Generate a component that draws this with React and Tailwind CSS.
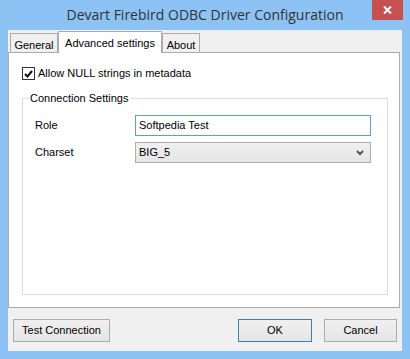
import React from "react";

const Tab = ({ label, active, width }) => (
  <div
    className={
      active
        ? "h-[22px] -mb-px bg-white border border-b-0 border-[#acacac] flex items-start justify-center pt-[3px] text-[11px] text-black relative z-10"
        : "h-[19px] bg-[#f0f0f0] border border-b-0 border-[#acacac] flex items-start justify-center pt-[3px] text-[11px] text-black"
    }
    style={{ width }}
  >
    {label}
  </div>
);

const Button = ({ children, width, primary }) => (
  <button
    className={
      "h-[23px] border text-[11px] text-black bg-gradient-to-b from-[#f0f0f0] to-[#e5e5e5] " +
      (primary ? "border-[#3c7fb1]" : "border-[#acacac]")
    }
    style={{ width }}
  >
    {children}
  </button>
);

export default function App() {
  return (
    <div className="w-[410px] h-[359px] bg-[#8cc3f4] flex flex-col font-['Liberation_Sans',Arial,sans-serif]">
      {/* title bar */}
      <div className="h-[30px] relative flex items-center justify-center">
        <span className="font-['Open_Sans',sans-serif] text-[14px] text-[#333] -mt-[2px]">
          Devart Firebird ODBC Driver Configuration
        </span>
        <div className="absolute right-[7px] top-0 w-[31px] h-[20px] bg-[#c75050] flex items-center justify-center">
          <svg width="9" height="8" viewBox="0 0 9 8">
            <path d="M1 0.5 L8 7.5 M8 0.5 L1 7.5" stroke="white" strokeWidth="2" />
          </svg>
        </div>
      </div>

      {/* client area */}
      <div className="mx-[8px] mb-[8px] flex-1 bg-[#f0f0f0] flex flex-col">
        <div className="h-[22px] flex items-end pl-[2px]">
          <Tab label="General" width={48} />
          <Tab label="Advanced settings" width={104} active />
          <Tab label="About" width={38} />
        </div>

        <div className="h-[256px] mr-[2px] bg-white border border-[#acacac] flex flex-col">
          <label className="mt-[14px] ml-[13px] h-[13px] leading-[13px] flex items-center gap-[3px] text-[11px] text-black">
            <span className="w-[13px] h-[13px] border border-[#333] bg-white flex items-center justify-center">
              <svg width="9" height="8" viewBox="0 0 9 8">
                <path d="M1 4 L3.5 6.5 L8 1" stroke="#111" strokeWidth="2" fill="none" />
              </svg>
            </span>
            Allow NULL strings in metadata
          </label>

          <div className="relative mt-[18px] ml-[13px] mr-[11px] h-[197px] border border-[#dcdcdc]">
            <span className="absolute -top-[8px] left-[5px] bg-white px-[2px] text-[11px] text-black leading-[14px]">
              Connection Settings
            </span>
            <div className="mt-[16px] flex items-center">
              <span className="w-[112px] pl-[12px] text-[11px] text-black">Role</span>
              <div className="w-[236px] h-[21px] border border-[#569de5] bg-white flex items-center pl-[3px] text-[11px] text-black">
                Softpedia Test
              </div>
            </div>
            <div className="mt-[6px] flex items-center">
              <span className="w-[112px] pl-[12px] text-[11px] text-black">Charset</span>
              <div className="w-[236px] h-[21px] border border-[#acacac] bg-gradient-to-b from-[#f0f0f0] to-[#e5e5e5] flex items-center justify-between pl-[3px] pr-[6px] text-[11px] text-black">
                BIG_5
                <svg width="8" height="6" viewBox="0 0 8 6">
                  <path d="M1 1 L4 4 L7 1" stroke="#555" strokeWidth="2" fill="none" />
                </svg>
              </div>
            </div>
          </div>
        </div>

        <div className="mt-[11px] flex items-center px-[5px]">
          <Button width={97}>Test Connection</Button>
          <div className="flex-1" />
          <Button width={74} primary>
            OK
          </Button>
          <div className="w-[12px]" />
          <Button width={73}>Cancel</Button>
        </div>
      </div>
    </div>
  );
}
